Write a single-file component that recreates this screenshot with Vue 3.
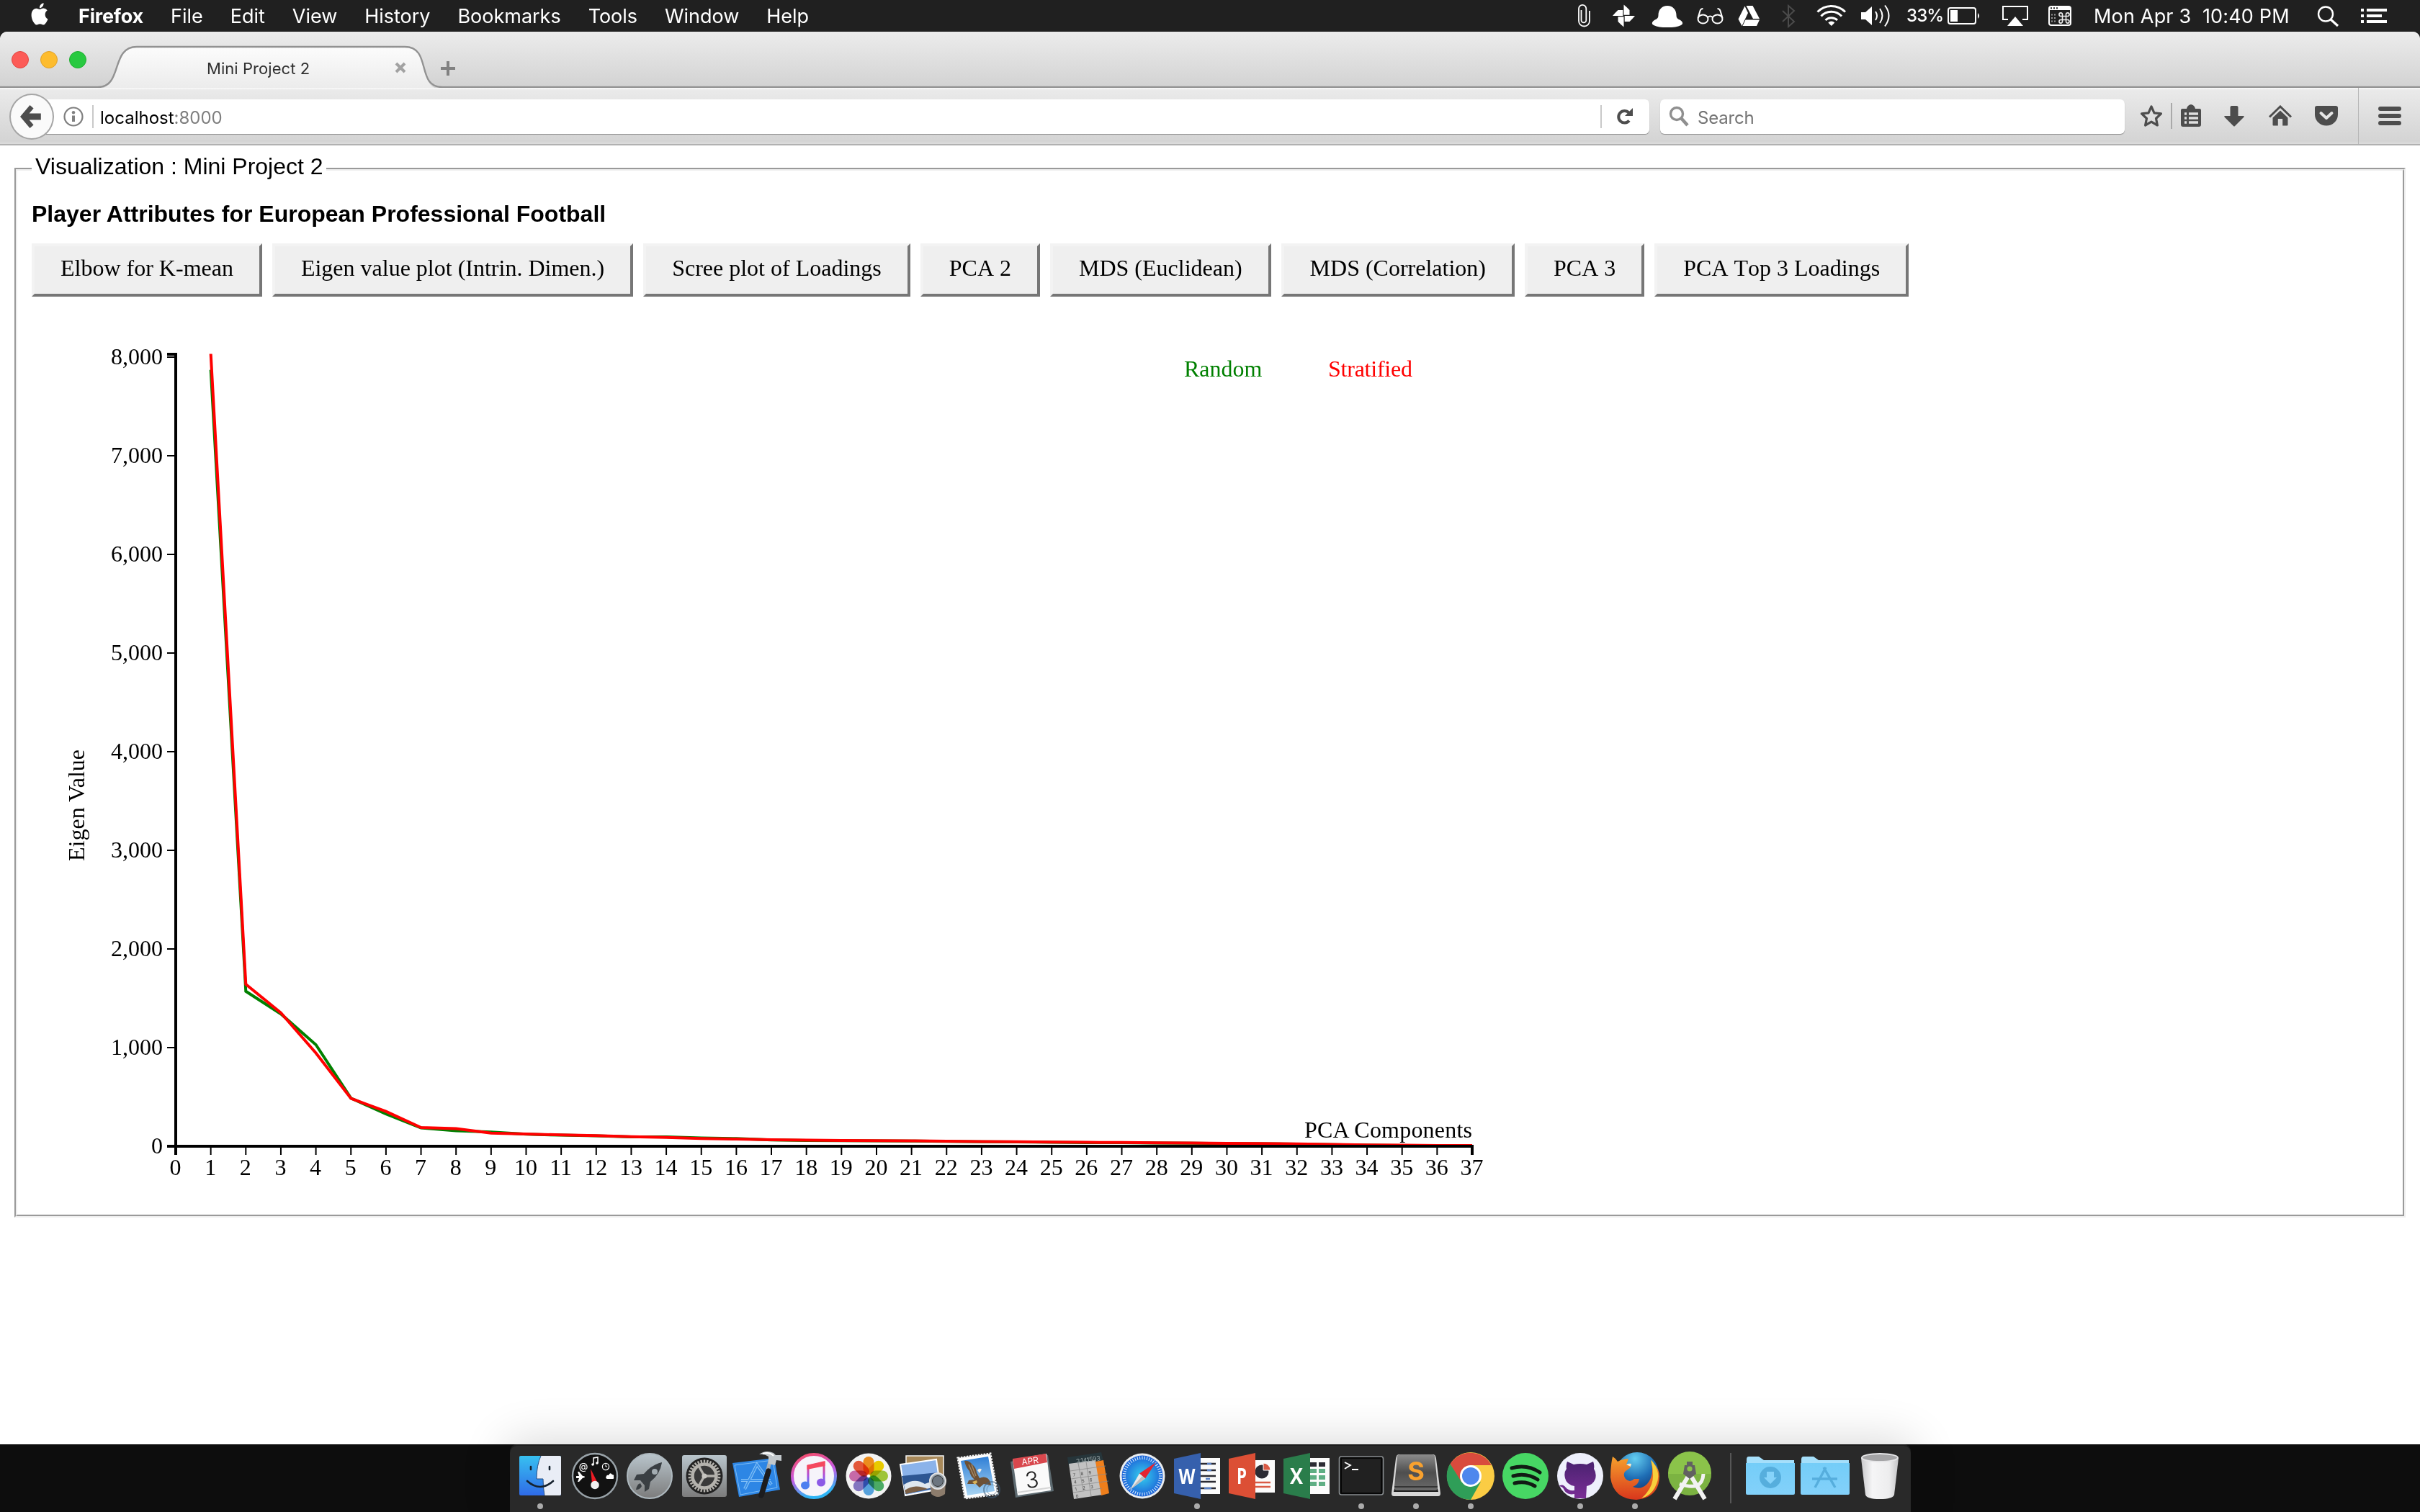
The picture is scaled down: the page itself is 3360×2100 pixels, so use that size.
<script setup>
const menus = ['File', 'Edit', 'View', 'History', 'Bookmarks', 'Tools', 'Window', 'Help']

const plots = [
  'Elbow for K-mean',
  'Eigen value plot (Intrin. Dimen.)',
  'Scree plot of Loadings',
  'PCA 2',
  'MDS (Euclidean)',
  'MDS (Correlation)',
  'PCA 3',
  'PCA Top 3 Loadings',
]

// Plot area, in the coordinates of the chart's viewBox
const left = 244
const top = 492
const bottom = 1592
const stepX = 1800 / 37
const stepY = 137
const x = (n) => left + n * stepX
const xTicks = Array.from({ length: 38 }, (_, i) => i)
const yTicks = Array.from({ length: 9 }, (_, i) => i * 1000)
const y = (v) => bottom - (v / 1000) * stepY

const tail = [
  1575, 1576.3, 1577.3, 1578.7, 1579.8, 1581.3, 1582, 1583, 1583.6, 1584, 1584.3, 1584.5, 1584.9, 1585.4,
  1585.7, 1586.2, 1586.6, 1586.8, 1587.2, 1587.5, 1588, 1588.2, 1588.8, 1589.5, 1590.2, 1590.6, 1591, 1591,
]
const stratified = [491.5, 1367, 1406.7, 1462.5, 1525.5, 1543.7, 1566, 1567.4, 1573.7, ...tail]
const random = [513.6, 1376.8, 1408.2, 1451, 1525.2, 1547.2, 1566.6, 1570.4, 1572.3, ...tail.map((v, i) => v + (i > 3 && i < 7 ? -0.7 : 0.3))]
const toPoints = (ys) => ys.map((v, i) => `${x(i + 1).toFixed(2)},${v}`).join(' ')

const petals = ['#f7931e', '#f4d400', '#a6ce39', '#4fb36a', '#5aa9e6', '#8a7cc9', '#d06fb0', '#ef5b3c']
const teeth = Array.from({ length: 30 }, (_, i) => i * 12)
const dialTicks = Array.from({ length: 48 }, (_, i) => i * 7.5)
</script>

<template>
  <div class="desktop">
    <header class="menubar">
      <svg class="apple" width="28" height="34" viewBox="0 -1 24 27" preserveAspectRatio="none"><path fill="#fff" d="M12.152 6.896c-.948 0-2.415-1.078-3.96-1.04-2.04.027-3.91 1.183-4.961 3.014-2.117 3.675-.546 9.103 1.519 12.09 1.013 1.454 2.208 3.09 3.792 3.039 1.52-.065 2.09-.987 3.935-.987 1.831 0 2.35.987 3.96.948 1.637-.026 2.676-1.48 3.676-2.948 1.156-1.688 1.636-3.325 1.662-3.415-.039-.013-3.182-1.221-3.22-4.857-.026-3.04 2.48-4.494 2.597-4.559-1.429-2.09-3.623-2.324-4.39-2.376-2-.156-3.675 1.09-4.61 1.09zM15.53 3.83c.843-1.012 1.4-2.427 1.245-3.83-1.207.052-2.662.805-3.532 1.818-.78.896-1.454 2.338-1.273 3.714 1.338.104 2.715-.688 3.559-1.701" /></svg>
      <nav class="menus">
        <b>Firefox</b>
        <span v-for="m in menus" :key="m">{{ m }}</span>
      </nav>
      <div class="status">
        <svg class="clip" width="20" height="44" viewBox="2189 0 20 44" fill="none" stroke="#fff" stroke-width="1.8"><path d="M2195.500 14v14a3.400 3.400 0 0 0 6.800 0V12a5 5 0 0 0-10.300 0v17a7.400 7.400 0 0 0 15 0V15" /></svg>
        <svg class="pinwheel" width="34" height="44" viewBox="2238 0 34 44" fill="#fff"><g transform="translate(2254.500 22)"><path v-for="r in [0, 90, 180, 270]" :key="r" :transform="`rotate(${r})`" d="M0-1.200V-15.500L4-12 8-8V-1.200Z" /></g></svg>
        <svg class="bell" width="46" height="44" viewBox="2292 0 46 44" fill="#fff"><path d="M2315 8c8 0 12.500 6 12.500 13 0 4 1.500 5 5.500 7 4 2.500 4 5.500 1 7-5 2.500-10 3-19 3s-14-.5-19-3c-3-1.500-3-4.500 1-7 4-2 5.500-3 5.500-7 0-7 4.500-13 12.500-13z" /></svg>
        <svg class="glasses" width="40" height="44" viewBox="2355 0 40 44" fill="none" stroke="#fff" stroke-width="2"><ellipse cx="2364.500" cy="26.500" rx="7" ry="6" /><ellipse cx="2384.500" cy="26.500" rx="7" ry="6" /><path d="M2371 24q3.500-3 7 0M2357.500 25l3-10q1-3 4-3M2391.500 25l-3-10q-1-3-4-3" /></svg>
        <svg class="drive" width="32" height="44" viewBox="2413 0 32 44" fill="#fff"><path d="M2422.500 8.500l4.500 9.500-8.500 18-5-9.500zM2424.500 8h9l9.500 18h-9zM2423.500 27.500h19.500l-4 8.500h-19.500z" /></svg>
        <svg class="bluetooth" width="20" height="44" viewBox="2473 0 20 44" fill="none" stroke="#4b4b4b" stroke-width="2"><path d="M2475 15l16 15-8 7V8l8 7-16 15" /></svg>
        <svg class="wifi" width="44" height="44" viewBox="2521 0 44 44" fill="none" stroke="#fff" stroke-width="3"><path d="M2523.500 16.500a27 27 0 0 1 38.500 0M2528.500 22.500a19.500 19.500 0 0 1 28.500 0M2534.500 28a12 12 0 0 1 16.500 0" /><path d="M2542.800 36l-4.500-4.500a6 6 0 0 1 9 0z" fill="#fff" stroke="none" /></svg>
        <svg class="volume" width="44" height="44" viewBox="2583 0 44 44" fill="none" stroke="#fff" stroke-width="2"><path d="M2584 17h6l9-8v26l-9-8h-6z" fill="#fff" stroke="none" /><path d="M2604 16q4 6 0 12M2610 12q7 10 0 20M2617 7.500q11 14 0 29" /></svg>
        <span class="percent">33%</span>
        <svg class="battery" width="48" height="44" viewBox="2703 0 48 44"><rect x="2705" y="11" width="38" height="22" rx="3" fill="none" stroke="#fff" stroke-width="2" /><path d="M2708 14h10v16h-10zM2746 18q4 4 0 8z" fill="#fff" /></svg>
        <svg class="airplay" width="40" height="44" viewBox="2778 0 40 44"><path d="M2788 27h-7V9h34v18h-7" fill="none" stroke="#fff" stroke-width="2" /><path d="M2798 23l11 13h-22z" fill="#fff" /></svg>
        <svg class="keys" width="36" height="44" viewBox="2842 0 36 44"><rect x="2845" y="9" width="30" height="26" rx="3" fill="none" stroke="#fff" stroke-width="2" /><path d="M2845 9h30v5h-30z" fill="#fff" /><path d="M2847 11.200h2m2 0h2m2 0h2" stroke="#222" stroke-width="2" /><path d="M2848 20.500h2m2 0h2m-6 4.500h2m2 0h2m-6 4.500h2m2 0h2" stroke="#999" stroke-width="2" /><path transform="translate(2858.500 17.500)" d="M5 5h5v5H5zM5 5V2.500A2.300 2.300 0 1 0 2.500 5zM10 5h2.500A2.300 2.300 0 1 0 10 2.500zM5 10H2.500A2.300 2.300 0 1 0 5 12.500zM10 10v2.500a2.300 2.300 0 1 0 2.500-2.500z" fill="none" stroke="#eee" stroke-width="1.600" /></svg>
        <span class="clock">Mon Apr 3&nbsp; 10:40 PM</span>
        <svg class="spot" width="32" height="44" viewBox="3216 0 32 44" fill="none" stroke="#fff"><circle cx="3229" cy="19.500" r="10" stroke-width="2.400" /><path d="M3236 27l10 9" stroke-width="3.200" /></svg>
        <svg class="list" width="38" height="44" viewBox="3277 0 38 44" stroke="#fff" stroke-width="4"><path d="M3278 14h4m4 0h28M3278 22h4m4 0h21M3278 30h4m4 0h28" /></svg>
      </div>
    </header>

    <main class="window">
      <div class="tabstrip">
        <svg class="tabshape" width="3360" height="78" viewBox="0 44 3360 78">
          <defs>
            <linearGradient id="tab" x1="0" x2="0" y1="0" y2="1"><stop offset="0" stop-color="#fcfcfc" /><stop offset="1" stop-color="#ebebeb" /></linearGradient>
          </defs>
          <path d="M136 124C168 122 154 65 190 65H562C600 65 578 122 612 124Z" fill="url(#tab)" />
          <path d="M0 121H136C171 121 153 65 190 65H562C600 65 577 121 614 121H3360" fill="none" stroke="#929292" stroke-width="2.400" />
        </svg>
        <div class="tabrow">
          <i class="light red" /><i class="light amber" /><i class="light green" />
          <span class="tabtitle">Mini Project 2</span>
          <svg class="close" width="18" height="18" viewBox="0 0 18 18"><path d="M3 3l12 12M15 3L3 15" stroke="#a2a2a2" stroke-width="4" /></svg>
          <svg class="plus" width="22" height="22" viewBox="0 0 22 22"><path d="M11 1v20M1 11h20" stroke="#818181" stroke-width="4" /></svg>
        </div>
      </div>

      <div class="toolbar">
        <div class="urlbar">
          <svg class="info" width="28" height="28" viewBox="0 0 28 28"><circle cx="14" cy="14" r="12.500" fill="none" stroke="#808080" stroke-width="2.200" /><circle cx="14" cy="8.300" r="2.200" fill="#808080" /><path d="M14 12.500v8.500" stroke="#808080" stroke-width="4" /></svg>
          <i class="rule" />
          <span class="url">localhost<em>:8000</em></span>
          <i class="rule end" />
          <svg class="reload" width="26" height="26" viewBox="0 0 26 26"><path d="M19 18.500A8.300 8.300 0 1 1 18.500 7.500" fill="none" stroke="#4d4d4d" stroke-width="4" /><path d="M24 1v11H13z" fill="#4d4d4d" /></svg>
        </div>
        <div class="search">
          <svg width="30" height="30" viewBox="0 0 30 30" fill="none" stroke="#8f8f8f"><circle cx="12" cy="11" r="8.500" stroke-width="3.400" /><path d="M18 17l9 10" stroke-width="4.600" /></svg>
          <span>Search</span>
        </div>
        <div class="tools">
          <svg class="star" width="34" height="34" viewBox="0 0 34 34"><path d="M17 4l4 8.800 9.500 1.100-7 6.600 1.900 9.500-8.400-4.800L8.600 30l1.900-9.500-7-6.600 9.500-1.100z" fill="none" stroke="#4d4d4d" stroke-width="3.200" stroke-linejoin="round" /></svg>
          <i class="split" />
          <svg class="board" width="30" height="34" viewBox="0 0 30 34"><path d="M3 7h6q1-5 6-6 5 1 6 6h6q2 0 2 2v20q0 3-3 3H4q-3 0-3-3V9q0-2 2-2z" fill="#4d4d4d" /><path d="M6 14h3m3 0h13M6 20h3m3 0h13M6 26h3m3 0h13" stroke="#e0e0e0" stroke-width="3.400" /></svg>
          <svg class="down" width="30" height="30" viewBox="0 0 30 30"><path d="M9.500 3q0-2 2-2h7q2 0 2 2v12H28q1.500 0 .5 1.500L16 29q-1 1-2 0L1.500 16.500q-1-1.500.5-1.500h7.500z" fill="#4d4d4d" /></svg>
          <svg class="home" width="34" height="30" viewBox="0 0 34 30"><path d="M2 16.500L17 2l15 14.500" fill="none" stroke="#4d4d4d" stroke-width="3" /><path d="M17 7.500l10.500 10V27.500q0 1-1 1h-6.300V19h-6.400v9.500H7.500q-1 0-1-1V17.500z" fill="#4d4d4d" /></svg>
          <svg class="pocket" width="34" height="30" viewBox="0 0 34 30"><path d="M4 1h26q3 0 3 3v9a16 15.500 0 0 1-32 0V4q0-3 3-3z" fill="#4d4d4d" /><path d="M9.500 11l7.500 7 7.500-7" fill="none" stroke="#e6e6e6" stroke-width="4" stroke-linecap="round" stroke-linejoin="round" /></svg>
          <i class="divider" />
          <div class="burger"><i /><i /><i /></div>
        </div>
      </div>

      <section class="page">
        <div class="groove">
          <div class="fieldset">
            <div class="legend">Visualization : Mini Project 2</div>
            <h1>Player Attributes for European Professional Football</h1>
            <div class="buttons">
              <button v-for="p in plots" :key="p">{{ p }}</button>
            </div>
            <svg class="chart" width="2700" height="1260" viewBox="44 412 2700 1260">
              <g class="series">
                <polyline :points="toPoints(random)" stroke="green" />
                <polyline :points="toPoints(stratified)" stroke="red" />
              </g>
              <g class="axis">
                <path class="domain" :d="`M232 ${top}H${left}V${bottom}H232`" />
                <path class="domain" :d="`M${left} 1604V${bottom}H2044V1604`" />
                <g v-for="v in yTicks" :key="v">
                  <path class="tick" :d="`M232 ${y(v)}H${left}`" />
                  <text x="226" :y="y(v) + 10" text-anchor="end">{{ v.toLocaleString('en-US') }}</text>
                </g>
                <g v-for="n in xTicks" :key="n">
                  <path class="tick" :d="`M${x(n)} ${bottom}V1604`" />
                  <text :x="x(n) - 0.5" y="1632" text-anchor="middle">{{ n }}</text>
                </g>
              </g>
              <text transform="translate(117 1041) rotate(-90)" text-anchor="end">Eigen Value</text>
              <text x="2044" y="1580" text-anchor="end" textLength="233">PCA Components</text>
              <text x="1644" y="523" fill="green">Random</text>
              <text x="1844" y="523" fill="red" textLength="117">Stratified</text>
            </svg>
          </div>
        </div>
      </section>
    </main>

    <footer class="dockarea">
      <div class="dock">
        <svg viewBox="-38 -44 76 94">
          <defs>
            <linearGradient id="fblue" x1="0" x2="0" y1="0" y2="1"><stop offset="0" stop-color="#37c0f0" /><stop offset="1" stop-color="#2f6be8" /></linearGradient>
            <linearGradient id="silver" x1="0" x2="0" y1="0" y2="1"><stop offset="0" stop-color="#b9c5cc" /><stop offset="1" stop-color="#7c7c7c" /></linearGradient>
            <linearGradient id="tunes" x1="0" x2=".3" y1="0" y2="1"><stop offset="0" stop-color="#fb4a5c" /><stop offset=".55" stop-color="#c65be6" /><stop offset="1" stop-color="#2fb4f5" /></linearGradient>
            <linearGradient id="note" x1="0" x2="0" y1="0" y2="1"><stop offset="0" stop-color="#f8475e" /><stop offset=".6" stop-color="#a94ee0" /><stop offset="1" stop-color="#3f86f2" /></linearGradient>
            <radialGradient id="compass"><stop offset="0" stop-color="#35d1ee" /><stop offset="1" stop-color="#1d62d8" /></radialGradient>
            <linearGradient id="folder" x1="0" x2="0" y1="0" y2="1"><stop offset="0" stop-color="#74cdf8" /><stop offset="1" stop-color="#83d1fa" /></linearGradient>
            <linearGradient id="bin" x1="0" x2="1" y1="0" y2="0"><stop offset="0" stop-color="#c9c9cb" /><stop offset=".3" stop-color="#f5f5f6" /><stop offset=".75" stop-color="#ededee" /><stop offset="1" stop-color="#c3c3c5" /></linearGradient>
            <linearGradient id="key" x1="0" x2="0" y1="0" y2="1"><stop offset="0" stop-color="#8c8c8c" /><stop offset=".5" stop-color="#4e4e4e" /><stop offset="1" stop-color="#6b6b6b" /></linearGradient>
            <linearGradient id="orange" x1="0" x2="0" y1="0" y2="1"><stop offset="0" stop-color="#f6a02c" /><stop offset="1" stop-color="#d8361c" /></linearGradient>
            <radialGradient id="globe" cx=".45" cy=".15" r=".9"><stop offset="0" stop-color="#63cdf0" /><stop offset=".5" stop-color="#1f6eb5" /><stop offset="1" stop-color="#102a63" /></radialGradient>
            <linearGradient id="sky" x1="0" x2="0" y1="0" y2="1"><stop offset="0" stop-color="#2f7fd6" /><stop offset="1" stop-color="#a9d5f3" /></linearGradient>
            <linearGradient id="cat" x1="0" x2="0" y1="0" y2="1"><stop offset="0" stop-color="#4a2270" /><stop offset="1" stop-color="#7a2e96" /></linearGradient>
          </defs>
          <rect x="-29" y="-28" width="58" height="55" rx="2" fill="url(#fblue)" />
          <path d="M1-28H27q2 0 2 2V25q0 2-2 2H6Q4 16 4 4H-5Q-5-15 1-28Z" fill="#e9edf6" />
          <path d="M1-28Q-5-15-5 4H4Q4 16 6 27" fill="none" stroke="#274f83" stroke-width="1" />
          <path d="M-13-13v4M13-13v4M-18 7Q0 23 18 7" fill="none" stroke="#16222e" stroke-width="2.600" stroke-linecap="round" />
          <circle class="dot" cy="42" r="4" />
        </svg>
        <svg viewBox="-38 -44 76 94">
          <circle r="31" fill="#121212" stroke="#98a2a8" stroke-width="2.400" />
          <path d="M-6-10L4 10H-4Z" fill="#ef1c24" /><circle cy="12.500" r="5.800" fill="#f1f1f1" />
          <text x="-16" y="-9" font-size="13" fill="#fff" text-anchor="middle" class="sans">@</text>
          <path d="M-2-16v-9l6-1v8" fill="none" stroke="#fff" stroke-width="1.500" /><circle cx="-3" cy="-16" r="1.800" fill="#fff" /><circle cx="3" cy="-18" r="1.800" fill="#fff" />
          <circle cx="15" cy="-13" r="4.600" fill="none" stroke="#fff" stroke-width="1.200" /><path d="M15-16v3h2" fill="none" stroke="#fff" />
          <path d="M-26 0H-22L-24-6h2l5 6q3 0 3 1.300T-17 2.800L-22 8h-2l2-5h-4z" fill="#fff" />
          <path d="M17 4q-3-1-1-4 1-2 3-1 2-5 5-1 3 0 2 3 1 3-1 3z" fill="#fff" />
        </svg>
        <svg viewBox="-38 -44 76 94">
          <circle r="31" fill="url(#silver)" stroke="#aeb9bf" stroke-width="2" />
          <path d="M17-19Q3-16-8-3l-10 1-4 8 9 0 6 7 0 9 6-4 2-10Q15-3 17-19Z" fill="#3a3f43" /><circle cx="7" cy="-6" r="4" fill="#a3acb1" />
          <path d="M-13 10q-5 2-6 9 6 0 8-5z" fill="#3a3f43" />
        </svg>
        <svg viewBox="-38 -44 76 94">
          <rect x="-31" y="-29" width="62" height="58" rx="3" fill="url(#silver)" />
          <circle r="25.500" fill="#232323" /><circle r="16.500" fill="#3a3a3a" stroke="#b4b2ad" stroke-width="4.500" />
          <path v-for="t in teeth" :key="t" :transform="`rotate(${t})`" d="M0-22.500v4" stroke="#b4b2ad" stroke-width="2.400" />
          <path d="M0 0H16M0 0L-8-14M0 0L-8 14" stroke="#b4b2ad" stroke-width="3.400" /><circle r="3.600" fill="#c6c4c0" />
        </svg>
        <svg viewBox="-38 -44 76 94">
          <path d="M-37-18L21-25 29 19-28 29Z" fill="#2d86e5" /><path d="M-34-15L19-22 25 16-26 26Z" fill="none" stroke="#7dbcf5" />
          <path d="M-20 18L-3-16 17 12M-25 6H16" fill="none" stroke="#8cc6f8" stroke-width="4" /><path d="M-20 18L-3-16 17 12M-25 6H16" fill="none" stroke="#3c92ea" stroke-width="2" />
          <path d="M16-25L3 29" stroke="#aab0b5" stroke-width="5" /><path d="M13-7L3 27" stroke="#1c1c1e" stroke-width="7.500" stroke-linecap="round" />
          <path d="M0-30Q9-37 20-32l3 3 8 0v8l-7-1-2 7-9-2V-27Q7-31 0-30Z" fill="#c2c8cc" /><path d="M5-31q9-3 15 3" fill="none" stroke="#fff" stroke-width="2" />
        </svg>
        <svg viewBox="-38 -44 76 94">
          <circle r="30" fill="#f6f4fa" stroke="url(#tunes)" stroke-width="4" />
          <path d="M-8 12V-14L14-19V8" fill="none" stroke="url(#note)" stroke-width="3" /><path d="M-9.500-15L15.500-20v6L-9.500-9Z" fill="#f5485e" />
          <ellipse cx="-12" cy="13" rx="6" ry="5.500" fill="#4c7ff0" /><ellipse cx="10" cy="9" rx="6" ry="5.500" fill="#8c5ae6" />
        </svg>
        <svg viewBox="-38 -44 76 94">
          <circle r="31.500" fill="#f3f3f3" />
          <rect v-for="(c, i) in petals" :key="c" class="petal" x="-7.500" y="-27" width="15" height="25" rx="7.500" :fill="c" :transform="`rotate(${i * 45})`" />
          <circle r="1.600" fill="#fff" />
        </svg>
        <svg viewBox="-38 -44 76 94">
          <path d="M-24-28H28V8H-24Z" fill="#a8895a" stroke="#f4f4f4" stroke-width="1.500" />
          <path d="M-32-16L18-23 24 18-25 27Z" fill="#8bb3ea" stroke="#fff" stroke-width="2" />
          <path d="M-30 0L21-5 24 16-25 25Z" fill="#2e5793" /><path d="M-27 12Q-12 2 2 11 12 6 22 9L23 14-25 24Z" fill="#dfe8f0" /><path d="M-26 20Q-12 10 6 18L-24 25Z" fill="#7a5f46" />
          <path d="M9 8H31L30 25Q20 33 11 25Z" fill="#8c7c6c" /><circle cx="20" cy="7" r="11" fill="#9aa5ad" stroke="#e2e2e2" stroke-width="2" /><circle cx="20" cy="7" r="7.500" fill="#6c7680" stroke="#333" />
        </svg>
        <svg viewBox="-38 -44 76 94">
          <path d="M-28-25L17-31 27 25-18 31Z" fill="#fff" stroke="#f4f4f4" stroke-width="3" stroke-dasharray="2.500 1.500" />
          <path d="M-24-21L14-27 23 21-15 27Z" fill="url(#sky)" />
          <path d="M-19-21Q-13-22-8-16-3-12-2-5L2 3Q8 0 13 3 17 6 18 13L8 11 2 16-3 11-15 11-13 6-5 5Q-11 0-12-7-17-12-19-21Z" fill="#6d5136" /><path d="M-13-16L-5 2M-9-16L-3 0" stroke="#a58a66" stroke-width="1.400" /><path d="M-8 8l6-2 1 3-4 3z" fill="#d8b25a" /><path d="M-1-8q3-4 6-1l-3 5z" fill="#f2ede2" />
          <circle cx="19" cy="19" r="11" fill="none" stroke="#3f5c78" stroke-width="2" opacity=".55" /><circle cx="19" cy="19" r="7" fill="none" stroke="#3f5c78" opacity=".5" />
        </svg>
        <svg viewBox="-38 -44 76 94">
          <path d="M-31-20L21-29 29 21-24 30Z" fill="#5d6a70" /><path d="M-28-23L19-31 25 20-21 27Z" fill="#fafafa" />
          <path d="M-28-24L18-31 20-19-26-10Z" fill="#d8474d" /><path d="M-22 23L25 16" stroke="#d5d5d5" stroke-width="2" />
          <text transform="rotate(-8)" x="-1" y="-17" font-size="12" fill="#fff" text-anchor="middle" class="sans">APR</text>
          <text transform="rotate(-8)" x="-2" y="16" font-size="31" fill="#222" text-anchor="middle" class="sans thin">3</text>
        </svg>
        <svg viewBox="-38 -44 76 94">
          <path d="M-28-26L19-33 22-21-26-13Z" fill="#26353a" /><path d="M-26-17L11-22 21 26-19 32Z" fill="#c2c2c2" /><path d="M11-20L22-22 30 24 19 27Z" fill="#ef7f1c" />
          <path d="M-24-7L25-14M-23 4L27-3M-22 14L29 7M-20 23L20 17M-13-18L-6 20M-2-20L5 28" stroke="#8c8c8c" stroke-width=".8" fill="none" />
          <text transform="rotate(-8)" x="21" y="-19" font-size="9" fill="#99a7a9" text-anchor="end" class="sans" textLength="34">3.141593</text>
          <g transform="rotate(-8)" font-size="6" fill="#444" class="sans"><text x="-20" y="-2">7</text><text x="-9" y="-2">8</text><text x="2" y="-2">9</text><text x="-20" y="8">4</text><text x="-9" y="8">5</text><text x="2" y="8">6</text><text x="-20" y="18">1</text><text x="-9" y="18">2</text><text x="2" y="18">3</text><text x="-20" y="28">0</text></g>
        </svg>
        <svg viewBox="-38 -44 76 94">
          <circle r="31.500" fill="#e9ecef" /><circle r="28.500" fill="url(#compass)" />
          <path v-for="t in dialTicks" :key="t" :transform="`rotate(${t})`" d="M0-27.500v4.500" stroke="#dff2ff" stroke-width="1" />
          <path d="M19-19L-4-3.500 4 3.500Z" fill="#e32530" /><path d="M-17 19L-4-3.500 4 3.500Z" fill="#e9e9e9" /><path d="M-17 19L0 0 4 3.500Z" fill="#bdbdbd" />
        </svg>
        <svg viewBox="-38 -44 76 94">
          <path d="M-2-25H32V25H-2Z" fill="#fbfbfb" /><path d="M3-17H26M3-8H26M3 0H26M3 8H26M3 17H26" stroke="#2b2b33" stroke-width="2.600" /><path d="M14-17H20M14-8H20M12 4H18M10 17H20" stroke="#5b83c9" stroke-width="2.400" />
          <path d="M-32-24L5-32V32L-32 24Z" fill="#3660ad" /><text x="-14" y="11" font-size="28" font-weight="700" fill="#fff" text-anchor="middle" class="office" textLength="23" lengthAdjust="spacingAndGlyphs">W</text>
          <circle class="dot" cy="42" r="4" />
        </svg>
        <svg viewBox="-38 -44 76 94">
          <path d="M-2-22H32V23H-2Z" fill="#fbfbfb" /><circle cx="14" cy="-6" r="9.500" fill="#2b2b33" /><path d="M16-8V-18A10 10 0 0 1 26-8Z" fill="#d95a45" stroke="#fff" /><path d="M5 9H26M5 15H26" stroke="#d95a45" stroke-width="2.400" />
          <path d="M-32-24L5-32V32L-32 24Z" fill="#dc4f35" /><text x="-14" y="11" font-size="30" font-weight="700" fill="#fff" text-anchor="middle" class="office" textLength="14" lengthAdjust="spacingAndGlyphs">P</text>
        </svg>
        <svg viewBox="-38 -44 76 94">
          <path d="M-2-25H32V25H-2Z" fill="#fbfbfb" /><g fill="#5fae84"><path v-for="r in [-9, 0, 9]" :key="r" :d="`M5 ${r - 1}H14v6H5zM17 ${r - 1}H26v6H17z`" /></g><path d="M5-19H14v6H5zM17-19H26v6H17z" fill="#2b2b33" />
          <path d="M-32-24L5-32V32L-32 24Z" fill="#2a7d4b" /><text x="-14" y="11" font-size="30" font-weight="700" fill="#fff" text-anchor="middle" class="office" textLength="18" lengthAdjust="spacingAndGlyphs">X</text>
        </svg>
        <svg viewBox="-38 -44 76 94">
          <rect x="-30.500" y="-27" width="61" height="53" rx="3" fill="#060606" stroke="#8a8f92" stroke-width="1.600" /><rect x="-27" y="-24" width="54" height="47" fill="#212121" />
          <path d="M-23-19l8 4-8 5" fill="none" stroke="#fff" stroke-width="1.800" /><path d="M-13-9h9" stroke="#fff" stroke-width="2" />
          <circle class="dot" cy="42" r="4" />
        </svg>
        <svg viewBox="-38 -44 76 94">
          <path d="M-28-24Q-27-30-24-30H24Q27-30 28-24L34 24Q34 28 31 28H-31Q-34 28-34 24Z" fill="#d7d7d7" /><path d="M-29 14H29L31 22H-31Z" fill="#1b1b1b" />
          <path d="M-26-27Q-26-30-22-30H22Q26-30 26-27L30 14Q30 20 27 20H-27Q-30 20-30 14Z" fill="url(#key)" /><path d="M-30 15H30" stroke="#343434" stroke-width="2" />
          <text y="6" font-size="36" font-weight="700" fill="#f8a12e" text-anchor="middle" class="sans">S</text>
          <circle class="dot" cy="42" r="4" />
        </svg>
        <svg viewBox="-38 -44 76 94">
          <circle r="33" fill="#fbcc44" /><path d="M-28.600-16.500A33 33 0 0 1 28.600-15H0L-14 8Z" fill="#d94b3d" /><path d="M-28.600-17A33 33 0 0 0 0 33L14 8 0 15-13 8Z" fill="#2f9e58" />
          <circle r="15" fill="#fff" /><circle r="12" fill="#4f87ed" /><circle class="dot" cy="42" r="4" />
        </svg>
        <svg viewBox="-38 -44 76 94">
          <circle r="32" fill="#47d764" /><path d="M-19-11Q2-17 20-5M-17 0Q1-5 17 5M-15 10Q0 6 13 14" fill="none" stroke="#111b14" stroke-width="5" stroke-linecap="round" />
        </svg>
        <svg viewBox="-38 -44 76 94">
          <circle r="32" fill="#eef0fc" />
          <path d="M-18-20L-9-16Q0-18 9-16L18-20Q20-15 19-10 23-4 21 4 18 12 9 14L8 31H-8L-8 25Q-18 27-22 20-24 14-30 14-24 10-20 16-16 21-8 20V14Q-19 12-21 3-23-5-19-10-20-15-18-20Z" fill="url(#cat)" />
          <circle class="dot" cy="42" r="4" />
        </svg>
        <svg viewBox="-38 -44 76 94">
          <circle cx="3" cy="-3" r="30" fill="url(#globe)" />
          <path d="M-31-27Q-26-24-24-20-17-24-9-24L-12-16Q-7-15-6-12L-14-6Q-17-1-13 4-7 10-1 4L6 4Q5 12-3 15 8 20 17 11 28-2 22-21 34-12 34 1 33 30 2 33-30 32-34 2-34-14-31-27Z" fill="url(#orange)" />
          <path d="M22-23Q37-6 30 11 24 27 9 31 26 16 25-2 25-14 22-23Z" fill="#f9cf3c" /><path d="M-12-16q4-2 7-1l-1 4z" fill="#fde9c8" />
          <circle class="dot" cy="42" r="4" />
        </svg>
        <svg viewBox="-38 -44 76 94">
          <circle cy="-4" r="30" fill="#8bc34a" /><path d="M-30-3A30 30 0 0 0 30-3Z" fill="#7cb342" />
          <path d="M0-3L-21 32M0-3L21 32" stroke="#f2f2f2" stroke-width="6" /><path d="M-14 11Q18 22 19-3" fill="none" stroke="#f2f2f2" stroke-width="5" />
          <path d="M-4-20H4V-15H7L9-3 0 4-9-3-7-15H-4Z" fill="#616161" /><circle cy="-10" r="3.600" fill="#8bc34a" />
        </svg>
        <i class="docksep" />
        <svg viewBox="-38 -44 76 94">
          <path d="M-33-23Q-33-27-30-27H-16L-9-22H33V-10H-33Z" fill="#a5dffb" /><path d="M-34-18H34V24Q34 26 32 26H-32Q-34 26-34 24Z" fill="url(#folder)" />
          <circle cy="2" r="15" fill="#56aedd" /><path d="M-5-6H5V2H9L0 11-9 2H-5Z" fill="#86d3fa" />
        </svg>
        <svg viewBox="-38 -44 76 94">
          <path d="M-33-23Q-33-27-30-27H-16L-9-22H33V-10H-33Z" fill="#a5dffb" /><path d="M-34-18H34V24Q34 26 32 26H-32Q-34 26-34 24Z" fill="url(#folder)" />
          <path d="M-14 16L1-12M-2-12L14 16M-18 4H17" stroke="#56aedd" stroke-width="3.400" />
        </svg>
        <svg viewBox="-38 -44 76 94">
          <path d="M-26-25L-20 26Q-18 32 0 32 18 32 20 26L26-25Z" fill="url(#bin)" /><ellipse cy="-25.500" rx="25" ry="5.500" fill="#a4a4a6" stroke="#e4e4e6" stroke-width="2" />
        </svg>
      </div>
    </footer>
  </div>
</template>

<style>
body { margin: 0; background: #000; }
</style>

<style scoped>
.desktop { width: 3360px; height: 2100px; overflow: hidden; display: flex; flex-direction: column; background: #202020; font-family: Inter, "Liberation Sans", sans-serif; }
svg { display: block; flex: none; }
i { display: block; flex: none; }

.menubar { height: 44px; flex: none; display: flex; align-items: center; color: #fff; font-size: 27px; letter-spacing: -.02px; line-height: 44px; white-space: nowrap; background: #202020; }
.apple { margin: -4px 0 0 41px; }
.menus { display: flex; gap: 38px; margin: 2px 0 0 40px; }
.menus b { letter-spacing: -.2px; }
.status { display: flex; align-items: center; margin-left: auto; padding-right: 45px; }
.pinwheel { margin-left: 29px; }
.bell { margin-left: 20px; }
.glasses { margin-left: 17px; }
.drive { margin-left: 18px; }
.bluetooth { margin-left: 28px; }
.wifi { margin-left: 28px; }
.volume { margin-left: 18px; }
.percent { width: 56px; margin-left: 20px; font-size: 24px; letter-spacing: -.9px; font-weight: 500; }
.airplay { margin-left: 27px; }
.keys { margin-left: 24px; }
.clock { width: 280px; margin: 2px 0 0 29px; letter-spacing: .18px; }
.spot { margin-left: 29px; }
.list { margin-left: 29px; }

.window { height: 1962px; flex: none; display: flex; flex-direction: column; background: #fff; border-radius: 10px 10px 0 0; overflow: hidden; }
.tabstrip { position: relative; height: 78px; flex: none; background: linear-gradient(#ececec, #d2d2d2); }
.tabshape { position: absolute; inset: 0; }
.tabrow { position: relative; height: 78px; display: flex; align-items: center; }
.light { width: 22px; height: 22px; border-radius: 50%; border: 1px solid; margin-right: 16px; }
.red { margin-left: 16px; background: #fc5b57; border-color: #e2443f; }
.amber { background: #fdbc2e; border-color: #e0a028; }
.green { background: #28c940; border-color: #1eae30; }
.tabtitle { width: 260px; margin: 23px 0 0 151px; font-size: 22px; letter-spacing: .05px; color: #303030; line-height: 28px; }
.close { margin-top: 22px; }
.plus { margin: 24px 0 0 46px; }

.toolbar { height: 78px; flex: none; display: flex; border-bottom: 2px solid #b1b1b1; background: linear-gradient(#fafafa 0, #eaeaea 3px, #d4d4d4 74px, #dcdcdc); }
.urlbar { position: relative; display: flex; align-items: center; width: 2246px; height: 48px; margin: 16px 0 0 44px; background: #fff; border-radius: 0 6px 6px 0; box-shadow: 0 1px 1px #8c8c8c; }
.urlbar::before { content: ""; position: absolute; left: -31px; top: -8px; width: 58px; height: 60px; border: 2px solid #a5a5a5; border-radius: 50%; background: #fafafa; }
.urlbar::after { content: ""; position: absolute; left: -16px; top: 8px; width: 30px; height: 32px; background: #4d4d4d; clip-path: polygon(0 50%, 45% 0, 62% 14%, 42% 36%, 96% 36%, 96% 64%, 42% 64%, 62% 86%, 45% 100%); }
.info { margin-left: 44px; }
.rule { width: 2px; height: 32px; margin-left: 12px; background: #c9c9c9; }
.url { margin: 2px 0 0 9px; font-size: 24px; letter-spacing: 0; color: #000; }
.url em { font-style: normal; color: #7f7f7f; }
.rule.end { margin-left: auto; margin-right: 19px; }
.reload { margin-right: 21px; }
.search { display: flex; align-items: center; width: 645px; height: 48px; margin: 16px 0 0 15px; background: #fff; border-radius: 6px; box-shadow: 0 1px 1px #8c8c8c; font-size: 24px; letter-spacing: -.2px; color: #747474; }
.search svg { margin-left: 11px; }
.search span { margin: 2px 0 0 11px; }
.tools { display: flex; align-items: center; height: 78px; flex: 1; }
.star { margin-left: 20px; }
.split { width: 2px; height: 36px; margin-left: 10px; background: #a9a9a9; }
.board { margin-left: 11px; }
.down { margin-left: 30px; }
.home { margin-left: 32px; }
.pocket { margin-left: 30px; }
.divider { width: 1px; height: 78px; margin-left: 27px; background: #b5b5b5; }
.burger { display: flex; flex-direction: column; gap: 4px; margin-left: 27px; }
.burger i { width: 32px; height: 6px; border-radius: 3px; background: #4d4d4d; }

.page { flex: 1; padding: 31px 20px 0; }
.groove { height: 1454px; border: 2px solid; border-color: #9a9a9a #eee #eee #9a9a9a; }
.fieldset { height: 1450px; border: 2px solid; border-color: #eee #9a9a9a #9a9a9a #eee; padding: 0 20px; display: flex; flex-direction: column; align-items: flex-start; font-family: "Liberation Sans", Arial, sans-serif; font-size: 32px; color: #000; }
.legend { height: 36px; line-height: 34px; margin-top: -23px; padding: 0 4px 0 5px; background: #fff; white-space: nowrap; }
h1 { margin: 28px 0 0; font-size: 32px; line-height: 38px; font-weight: 700; white-space: nowrap; }
.buttons { display: flex; gap: 14px; margin-top: 22px; }
button { height: 74px; padding: 0 36px 5px; margin: 0; border: 4px solid; border-color: #f3f3f3 #767676 #767676 #f3f3f3; background: #efefef; font: 32px "Liberation Serif", "Times New Roman", serif; font-kerning: none; color: #000; white-space: nowrap; }
.chart { font: 32px "Liberation Serif", "Times New Roman", serif; }
.series polyline { fill: none; stroke-width: 4; }
.domain { fill: none; stroke: #000; stroke-width: 4; }
.tick { stroke: #000; stroke-width: 2; }

.dockarea { height: 94px; flex: none; display: flex; padding-left: 708px; background: #0d0d0d; }
.dock { position: relative; width: 1937px; height: 94px; display: flex; padding: 0 4px; background: #292929; border-radius: 10px 10px 0 0; box-shadow: inset 0 2px 0 #1b1b1b, 0 0 64px 4px rgba(0, 0, 0, .16); }
.dock svg { width: 76px; height: 94px; }
.dot { fill: #ababab; }
.petal { mix-blend-mode: multiply; }
.sans { font-family: Inter, sans-serif; }
.thin { font-weight: 300; }
.office { font-family: "Open Sans", sans-serif; }
.docksep { width: 2px; height: 70px; margin: 12px 16px 0 18px; background: #565656; }
</style>
